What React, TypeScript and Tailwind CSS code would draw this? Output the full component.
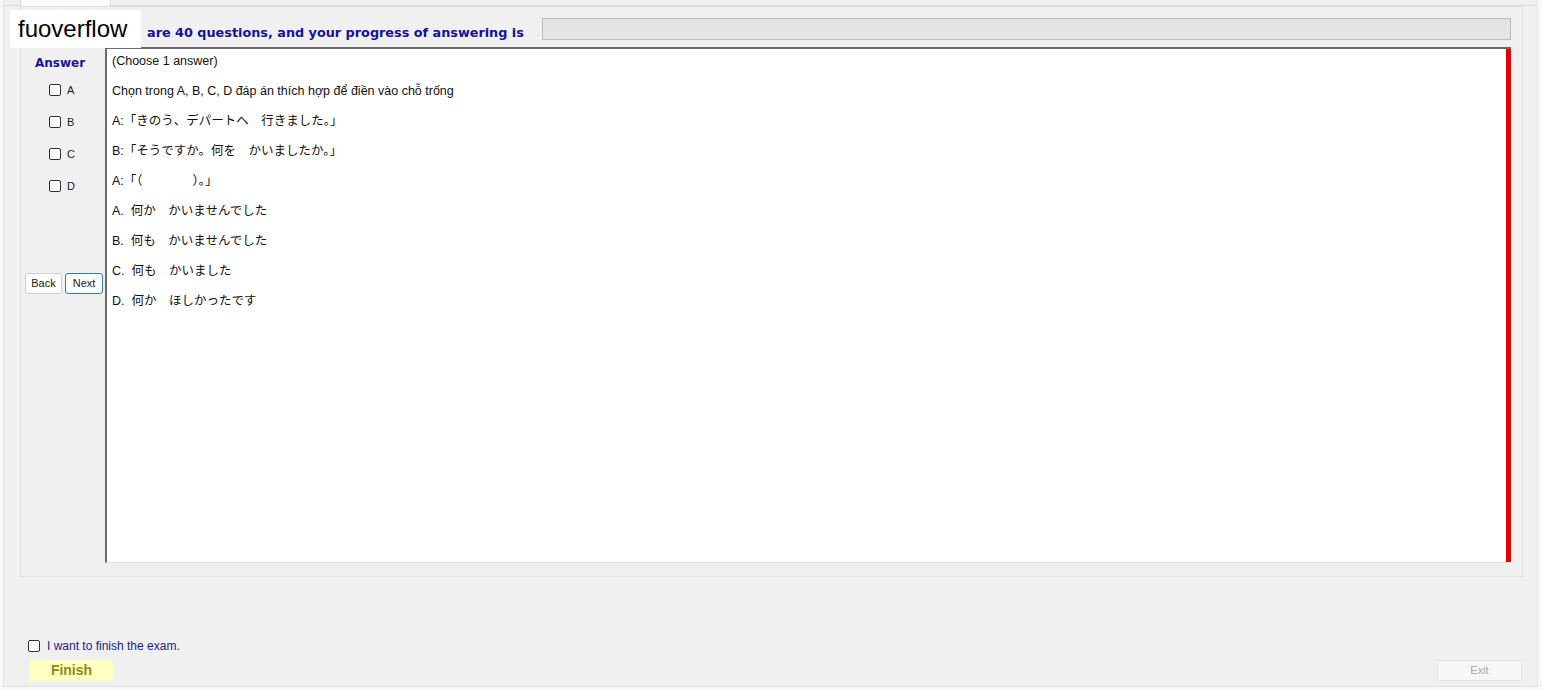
import React from 'react'

// Exam client: one question screen
const options = ['A', 'B', 'C', 'D']

const questionLines = [
  '(Choose 1 answer)',
  'Chọn trong A, B, C, D đáp án thích hợp để điền vào chỗ trống',
  'A:「きのう、デパートへ　行きました。」',
  'B:「そうですか。何を　かいましたか。」',
  'A:「（　　　　）。」',
  'A.  何か　かいませんでした',
  'B.  何も　かいませんでした',
  'C.  何も　かいました',
  'D.  何か　ほしかったです',
]

const verdana = { fontFamily: '"DejaVu Sans", "Liberation Sans", sans-serif' }

function Box() {
  return <span className="inline-block w-[12px] h-[12px] border border-[#333] rounded-[2px] bg-white" />
}

export default function App() {
  return (
    <div
      className="relative w-[1542px] h-[690px] bg-[#f8f8f8] overflow-hidden text-[12px] text-[#111]"
      style={{ fontFamily: '"Liberation Sans", "Noto Sans CJK JP", sans-serif' }}
    >
      <div className="ml-[3px] w-[1535px] h-[687px] bg-[#f0f0f0] border-l border-r border-b border-[#e2e2e2] flex flex-col">
        {/* tab strip */}
        <div className="h-[6px] border-b border-[#dcdcdc] flex">
          <div className="ml-[16px] w-[91px] h-[6px] bg-[#fbfbfb] border-l border-r border-[#d8d8d8]" />
        </div>

        {/* question panel */}
        <div className="ml-[16px] w-[1503px] h-[571px] border border-[#e0e0e0] bg-[#f0f0f0] flex flex-col">
          {/* header (the start of the sentence sits under the watermark) */}
          <div className="h-[40px] flex">
            <span
              className="ml-[126px] mt-[18px] w-[395px] leading-[16px] text-[12.8px] font-bold text-[#1212a0] whitespace-nowrap"
              style={verdana}
            >
              are 40 questions, and your progress of answering is
            </span>
            <div className="mt-[11px] w-[969px] h-[22px] bg-[#e4e4e4] border border-[#bcbcbc]" />
          </div>

          {/* body */}
          <div className="flex h-[516px]">
            <div className="w-[84px] flex flex-col pt-[8px]">
              <div className="pl-[14px] leading-[16px] h-[16px] text-[12px] font-bold text-[#1515a0]" style={verdana}>
                Answer
              </div>
              <div className="mt-[3px] flex flex-col">
                {options.map(o => (
                  <div key={o} className="h-[32px] pl-[28px] flex items-center gap-[6px]">
                    <Box />
                    <span className="text-[11px] text-[#222]">{o}</span>
                  </div>
                ))}
              </div>
              <div className="mt-[71px] pl-[4px] flex gap-[3px]">
                <button className="w-[37px] h-[21px] bg-[#fdfdfd] border border-[#d0d0d0] rounded-[3px] text-[11px] text-[#222]">
                  Back
                </button>
                <button className="w-[38px] h-[21px] bg-[#fdfdfd] border border-[#2c7cb8] rounded-[3px] text-[11px] text-[#222]">
                  Next
                </button>
              </div>
            </div>

            <div className="w-[1406px] h-[516px] bg-white border-l-2 border-t-2 border-[#6a6a6a] border-b border-b-[#dcdcdc] flex">
              <div className="flex-1 pl-[5px] flex flex-col gap-[6px] text-[12.5px]">
                {questionLines.map(line => (
                  <div key={line} className="leading-[24px] whitespace-pre">
                    {line}
                  </div>
                ))}
              </div>
              <div className="w-[5px] bg-[#e00000]" />
            </div>
          </div>
        </div>

        {/* finish area */}
        <div className="mt-[63px] h-[12px] pl-[24px] flex items-center gap-[7px]">
          <Box />
          <span className="text-[12px] text-[#1a1a8c]">I want to finish the exam.</span>
        </div>
        <div className="mt-[8px] flex justify-between pr-[15px]">
          <button className="ml-[26px] w-[83px] h-[21px] bg-[#ffffc2] text-[14px] font-bold text-[#8c8c10]">Finish</button>
          <button className="w-[85px] h-[21px] bg-[#f7f7f7] border border-[#e4e4e4] text-[11px] text-[#a8a8a8]">Exit</button>
        </div>
      </div>

      {/* watermark */}
      <div className="absolute left-[10px] top-[10px] w-[131px] h-[38px] bg-white flex items-center pl-[8px] text-[24px] text-black">
        fuoverflow
      </div>
    </div>
  )
}
